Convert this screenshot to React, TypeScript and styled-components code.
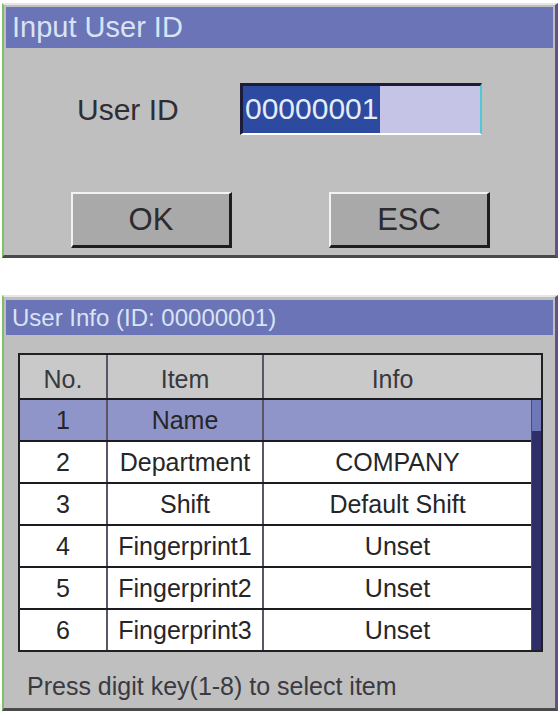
import React from "react";
import styled, { createGlobalStyle } from "styled-components";

const Global = createGlobalStyle`
  html, body { margin: 0; padding: 0; background: #ffffff; }
  body { font-family: "Liberation Sans", Arial, sans-serif; }
  * { box-sizing: border-box; }
`;

const Page = styled.div`
  width: 560px;
  height: 715px;
  padding: 3px 2px 0 2px;
  display: flex;
  flex-direction: column;
`;

const Dialog = styled.div<{ $gapTop?: number; $padTop?: number }>`
  background: #bfbfc0;
  border-style: solid;
  border-width: 2px 3px 3px 2px;
  border-color: #e6e6e6 #6a4f86 #4a4a4a #7fbf6a;
  padding: ${(p) => p.$padTop ?? 2}px 2px 0 2px;
  display: flex;
  flex-direction: column;
  margin-top: ${(p) => p.$gapTop ?? 0}px;
`;

const TitleBar = styled.div<{ $h: number; $size: number }>`
  height: ${(p) => p.$h}px;
  background: #6a74b7;
  color: #d9e3f4;
  font-size: ${(p) => p.$size}px;
  line-height: ${(p) => p.$h}px;
  padding-left: 6px;
  white-space: nowrap;
`;

const InputBody = styled.div`
  height: 207px;
  display: flex;
  flex-direction: column;
  padding-top: 35px;
`;

const FieldRow = styled.div`
  display: flex;
  align-items: center;
  height: 52px;
`;

const Label = styled.div`
  width: 234px;
  padding-left: 71px;
  padding-top: 2px;
  font-size: 30px;
  color: #2e2e34;
`;

const InputBox = styled.div`
  width: 242px;
  height: 52px;
  display: flex;
  border-style: solid;
  border-width: 3px 2px 2px 3px;
  border-color: #1c1c3a #4fc8d8 #ffffff #1c1c3a;
  background: #c5c4e6;
  font-size: 30px;
  line-height: 46px;
`;

const Selected = styled.span`
  background: #2c4a9f;
  color: #e4ecf8;
  padding: 0 2px 0 2px;
`;

const ButtonRow = styled.div`
  display: flex;
  margin-top: 57px;
  padding-left: 65px;
  gap: 97px;
`;

const Button = styled.div`
  width: 161px;
  height: 56px;
  border-style: solid;
  border-width: 2px 3px 3px 2px;
  border-color: #f2f2f2 #1e1e1e #1e1e1e #f2f2f2;
  background: #a9a9aa;
  color: #2b2b30;
  font-size: 31px;
  display: flex;
  align-items: center;
  justify-content: center;
`;

const InfoBody = styled.div`
  padding: 18px 10px 0 12px;
  display: flex;
  flex-direction: column;
`;

const TableFrame = styled.div`
  border: 2px solid #1f1f24;
  background: #ffffff;
  display: flex;
  flex-direction: column;
`;

const GridRow = styled.div<{ $h: number; $bg: string; $line: boolean }>`
  display: grid;
  grid-template-columns: 88px 156px 1fr;
  height: ${(p) => p.$h + (p.$line ? 2 : 0)}px;
  background: ${(p) => p.$bg};
  border-bottom: ${(p) => (p.$line ? "2px solid #1c1c20" : "none")};
`;

const Cell = styled.div<{ $last?: boolean; $head?: boolean }>`
  display: flex;
  align-items: center;
  justify-content: center;
  font-size: 25px;
  color: ${(p) => (p.$head ? "#38383e" : "#262628")};
  white-space: nowrap;
  padding-top: ${(p) => (p.$head ? 5 : 1)}px;
  padding-right: ${(p) => (p.$head && p.$last ? 20 : 0)}px;
  border-right: ${(p) => (p.$last ? "none" : "2px solid #5e5468")};
`;

const BodyWrap = styled.div`
  display: flex;
`;

const Rows = styled.div`
  flex: 1;
  display: flex;
  flex-direction: column;
`;

const ScrollBar = styled.div`
  width: 10px;
  display: flex;
  flex-direction: column;
  border-left: 1px solid #4a4a80;
`;

const ScrollTop = styled.div`
  height: 31px;
  background: #6e77b8;
`;

const ScrollRest = styled.div`
  flex: 1;
  background: #2f2e68;
`;

const Status = styled.div`
  height: 56px;
  padding: 20px 0 0 9px;
  font-size: 25px;
  color: #3a3a40;
  white-space: nowrap;
`;

const rows = [
  { no: "1", item: "Name", info: "" },
  { no: "2", item: "Department", info: "COMPANY" },
  { no: "3", item: "Shift", info: "Default Shift" },
  { no: "4", item: "Fingerprint1", info: "Unset" },
  { no: "5", item: "Fingerprint2", info: "Unset" },
  { no: "6", item: "Fingerprint3", info: "Unset" },
];

export default function App() {
  return (
    <>
      <Global />
      <Page>
        <Dialog>
          <TitleBar $h={41} $size={29}>Input User ID</TitleBar>
          <InputBody>
            <FieldRow>
              <Label>User ID</Label>
              <InputBox>
                <Selected>00000001</Selected>
              </InputBox>
            </FieldRow>
            <ButtonRow>
              <Button>OK</Button>
              <Button>ESC</Button>
            </ButtonRow>
          </InputBody>
        </Dialog>

        <Dialog $gapTop={37} $padTop={3}>
          <TitleBar $h={35} $size={24}>User Info (ID: 00000001)</TitleBar>
          <InfoBody>
            <TableFrame>
              <GridRow $h={43} $bg="#c9c9ca" $line>
                <Cell $head>No.</Cell>
                <Cell $head>Item</Cell>
                <Cell $head $last>Info</Cell>
              </GridRow>
              <BodyWrap>
                <Rows>
                  {rows.map((r, i) => (
                    <GridRow
                      key={r.no}
                      $h={40}
                      $bg={i === 0 ? "#8f94c9" : "#ffffff"}
                      $line={i < rows.length - 1}
                    >
                      <Cell>{r.no}</Cell>
                      <Cell>{r.item}</Cell>
                      <Cell $last>{r.info}</Cell>
                    </GridRow>
                  ))}
                </Rows>
                <ScrollBar>
                  <ScrollTop />
                  <ScrollRest />
                </ScrollBar>
              </BodyWrap>
            </TableFrame>
            <Status>Press digit key(1-8) to select item</Status>
          </InfoBody>
        </Dialog>
      </Page>
    </>
  );
}
